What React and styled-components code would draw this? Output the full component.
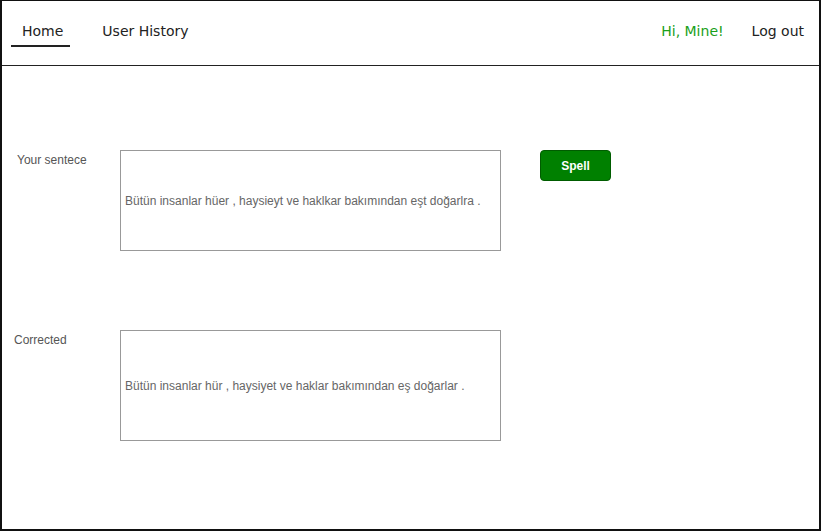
import React from 'react';
import styled, { createGlobalStyle } from 'styled-components';

const GlobalStyle = createGlobalStyle`
    html, body {
        margin: 0;
        padding: 0;
        background: #ffffff;
    }
    * {
        box-sizing: border-box;
    }
`;

let Frame = styled.div`
    width: 821px;
    height: 531px;
    border: 1px solid #111;
    border-left-width: 2px;
    border-bottom-width: 2px;
    border-right-width: 2px;
    background: #ffffff;
    display: flex;
    flex-direction: column;
`;

let Header = styled.div`
    height: 65px;
    border-bottom: 1px solid #222;
    display: flex;
    align-items: center;
    justify-content: space-between;
    padding: 0 15px 0 9px;
    font-family: 'DejaVu Sans', Verdana, sans-serif;
    font-size: 14px;
`;

let NavGroup = styled.div`
    display: flex;
    align-items: center;
    gap: ${(props) => props.gap}px;
`;

let Tab = styled.div`
    color: ${(props) => props.color || '#222'};
    padding: ${(props) => (props.active ? '0 7px 0 11px' : '0')};
    height: 30px;
    display: flex;
    align-items: center;
    border-bottom: 2px solid ${(props) => (props.active ? '#222' : 'transparent')};
    margin-top: -2px;
`;

// 본문 영역
let Main = styled.div`
    padding-top: 84px;
    display: flex;
    flex-direction: column;
    gap: 79px;
`;

let Row = styled.div`
    display: grid;
    grid-template-columns: 118px 381px 39px 71px;
    align-items: start;
`;

let Label = styled.div`
    font-family: 'Liberation Sans', Arial, sans-serif;
    font-size: 12px;
    color: #555;
    padding-left: ${(props) => props.indent}px;
    padding-top: 3px;
`;

let TextBox = styled.div`
    height: ${(props) => props.h}px;
    border: 1px solid #999;
    display: flex;
    align-items: center;
    padding-left: 4px;
    font-family: 'Liberation Sans', Arial, sans-serif;
    font-size: 12px;
    color: #666;
`;

let SpellButton = styled.button`
    grid-column: 4;
    width: 71px;
    height: 31px;
    background-color: #008000;
    border: 1px solid #005c00;
    border-radius: 4px;
    color: #ffffff;
    font-family: 'Liberation Sans', Arial, sans-serif;
    font-weight: bold;
    font-size: 12px;
    padding: 0;
`;

const App = () => {
    return (
        <Frame>
            <GlobalStyle />
            <Header>
                <NavGroup gap={32}>
                    <Tab active>Home</Tab>
                    <Tab>User History</Tab>
                </NavGroup>
                <NavGroup gap={28}>
                    <Tab color="#1aa01a">Hi, Mine!</Tab>
                    <Tab>Log out</Tab>
                </NavGroup>
            </Header>
            <Main>
                <Row>
                    <Label indent={15}>Your sentece</Label>
                    <TextBox h={101}>
                        Bütün insanlar hüer , haysieyt ve haklkar bakımından eşt doğarlra .
                    </TextBox>
                    <SpellButton>Spell</SpellButton>
                </Row>
                <Row>
                    <Label indent={12}>Corrected</Label>
                    <TextBox h={111}>
                        Bütün insanlar hür , haysiyet ve haklar bakımından eş doğarlar .
                    </TextBox>
                </Row>
            </Main>
        </Frame>
    );
};

export default App;
